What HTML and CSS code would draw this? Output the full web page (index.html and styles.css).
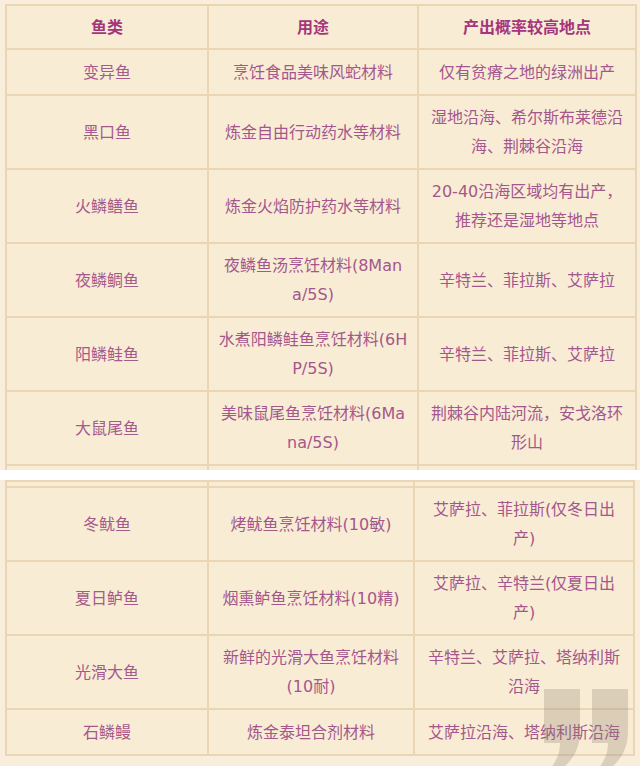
FILE: index.html
```html
<!DOCTYPE html>
<html lang="zh">
<head>
<meta charset="utf-8">
<link rel="stylesheet" href="styles.css">
</head>
<body>
<div class="shot shot-top">
  <table class="fish">
    <colgroup><col class="c1"><col class="c2"><col class="c3"></colgroup>
    <tr class="head"><th>鱼类</th><th>用途</th><th>产出概率较高地点</th></tr>
    <tr class="r1"><td>变异鱼</td><td>烹饪食品美味风蛇材料</td><td>仅有贫瘠之地的绿洲出产</td></tr>
    <tr class="r2"><td>黑口鱼</td><td>炼金自由行动药水等材料</td><td>湿地沿海、希尔斯布莱德沿<br>海、荆棘谷沿海</td></tr>
    <tr class="r2"><td>火鳞鳝鱼</td><td>炼金火焰防护药水等材料</td><td>20-40沿海区域均有出产，<br>推荐还是湿地等地点</td></tr>
    <tr class="r2"><td>夜鳞鲷鱼</td><td>夜鳞鱼汤烹饪材料(8Man<br>a/5S)</td><td>辛特兰、菲拉斯、艾萨拉</td></tr>
    <tr class="r2"><td>阳鳞鲑鱼</td><td>水煮阳鳞鲑鱼烹饪材料(6H<br>P/5S)</td><td>辛特兰、菲拉斯、艾萨拉</td></tr>
    <tr class="r2"><td>大鼠尾鱼</td><td>美味鼠尾鱼烹饪材料(6Ma<br>na/5S)</td><td>荆棘谷内陆河流，安戈洛环<br>形山</td></tr>
    <tr class="r2"><td></td><td></td><td></td></tr>
  </table>
</div>
<div class="shot shot-bottom">
  <table class="fish fish-b">
    <colgroup><col class="c1"><col class="c2b"><col class="c3b"></colgroup>
    <tr class="stub"><td></td><td></td><td></td></tr>
    <tr class="r2"><td>冬鱿鱼</td><td>烤鱿鱼烹饪材料(10敏)</td><td>艾萨拉、菲拉斯(仅冬日出<br>产)</td></tr>
    <tr class="r2"><td>夏日鲈鱼</td><td>烟熏鲈鱼烹饪材料(10精)</td><td>艾萨拉、辛特兰(仅夏日出<br>产)</td></tr>
    <tr class="r2"><td>光滑大鱼</td><td>新鲜的光滑大鱼烹饪材料<br>(10耐)</td><td>辛特兰、艾萨拉、塔纳利斯<br>沿海</td></tr>
    <tr class="r1"><td>石鳞鳗</td><td>炼金泰坦合剂材料</td><td>艾萨拉沿海、塔纳利斯沿海</td></tr>
  </table>
  <svg class="mark" width="96" height="84" viewBox="0 0 96 84" aria-hidden="true">
    <path d="M4 4 H40 V46 C40 62 34 74 22 84 H10 C18 74 20 66 20 58 H4 Z" fill="#8c8170" fill-opacity="0.28"/>
    <path d="M52 4 H88 V46 C88 62 82 74 70 84 H58 C66 74 68 66 68 58 H52 Z" fill="#8c8170" fill-opacity="0.28"/>
  </svg>
</div>
</body>
</html>
```
FILE: styles.css
```css
html, body {
  margin: 0;
  padding: 0;
  background: #ffffff;
}
body {
  width: 640px;
  font-family: "DejaVu Sans", "Noto Sans CJK SC", sans-serif;
}
.shot {
  background: #f9eedb;
  overflow: hidden;
  position: relative;
}
.shot-top {
  height: 470px;
  padding: 4px 0 0 5px;
  box-sizing: border-box;
}
.shot-bottom {
  margin-top: 10px;
  height: 286px;
  padding: 0 0 0 5px;
  box-sizing: border-box;
}
.fish {
  border-collapse: collapse;
  table-layout: fixed;
  width: 630px;
  background: #f8ecd5;
  border: 2px solid #ead6b5;
}
.fish-b {
  width: 628px;
  border-top: none;
}
.c1 { width: 202px; }
.c2 { width: 210px; }
.c3 { width: 218px; }
.c2b { width: 206px; }
.c3b { width: 220px; }
.fish th, .fish td {
  border: 2px solid #ead6b5;
  text-align: center;
  vertical-align: middle;
  padding: 0 6px;
  font-size: 16px;
  line-height: 29px;
  color: #a4578c;
  font-weight: 400;
}
.fish th {
  color: #a5357c;
  font-weight: 700;
}
.fish td:first-child { color: #a65a8c; }
.head { height: 44px; }
.r1 { height: 46px; }
.r2 { height: 74px; }
.stub { height: 6px; }
.stub td { padding: 0; line-height: 0; }
.mark {
  position: absolute;
  right: 4px;
  bottom: -3px;
}
```
